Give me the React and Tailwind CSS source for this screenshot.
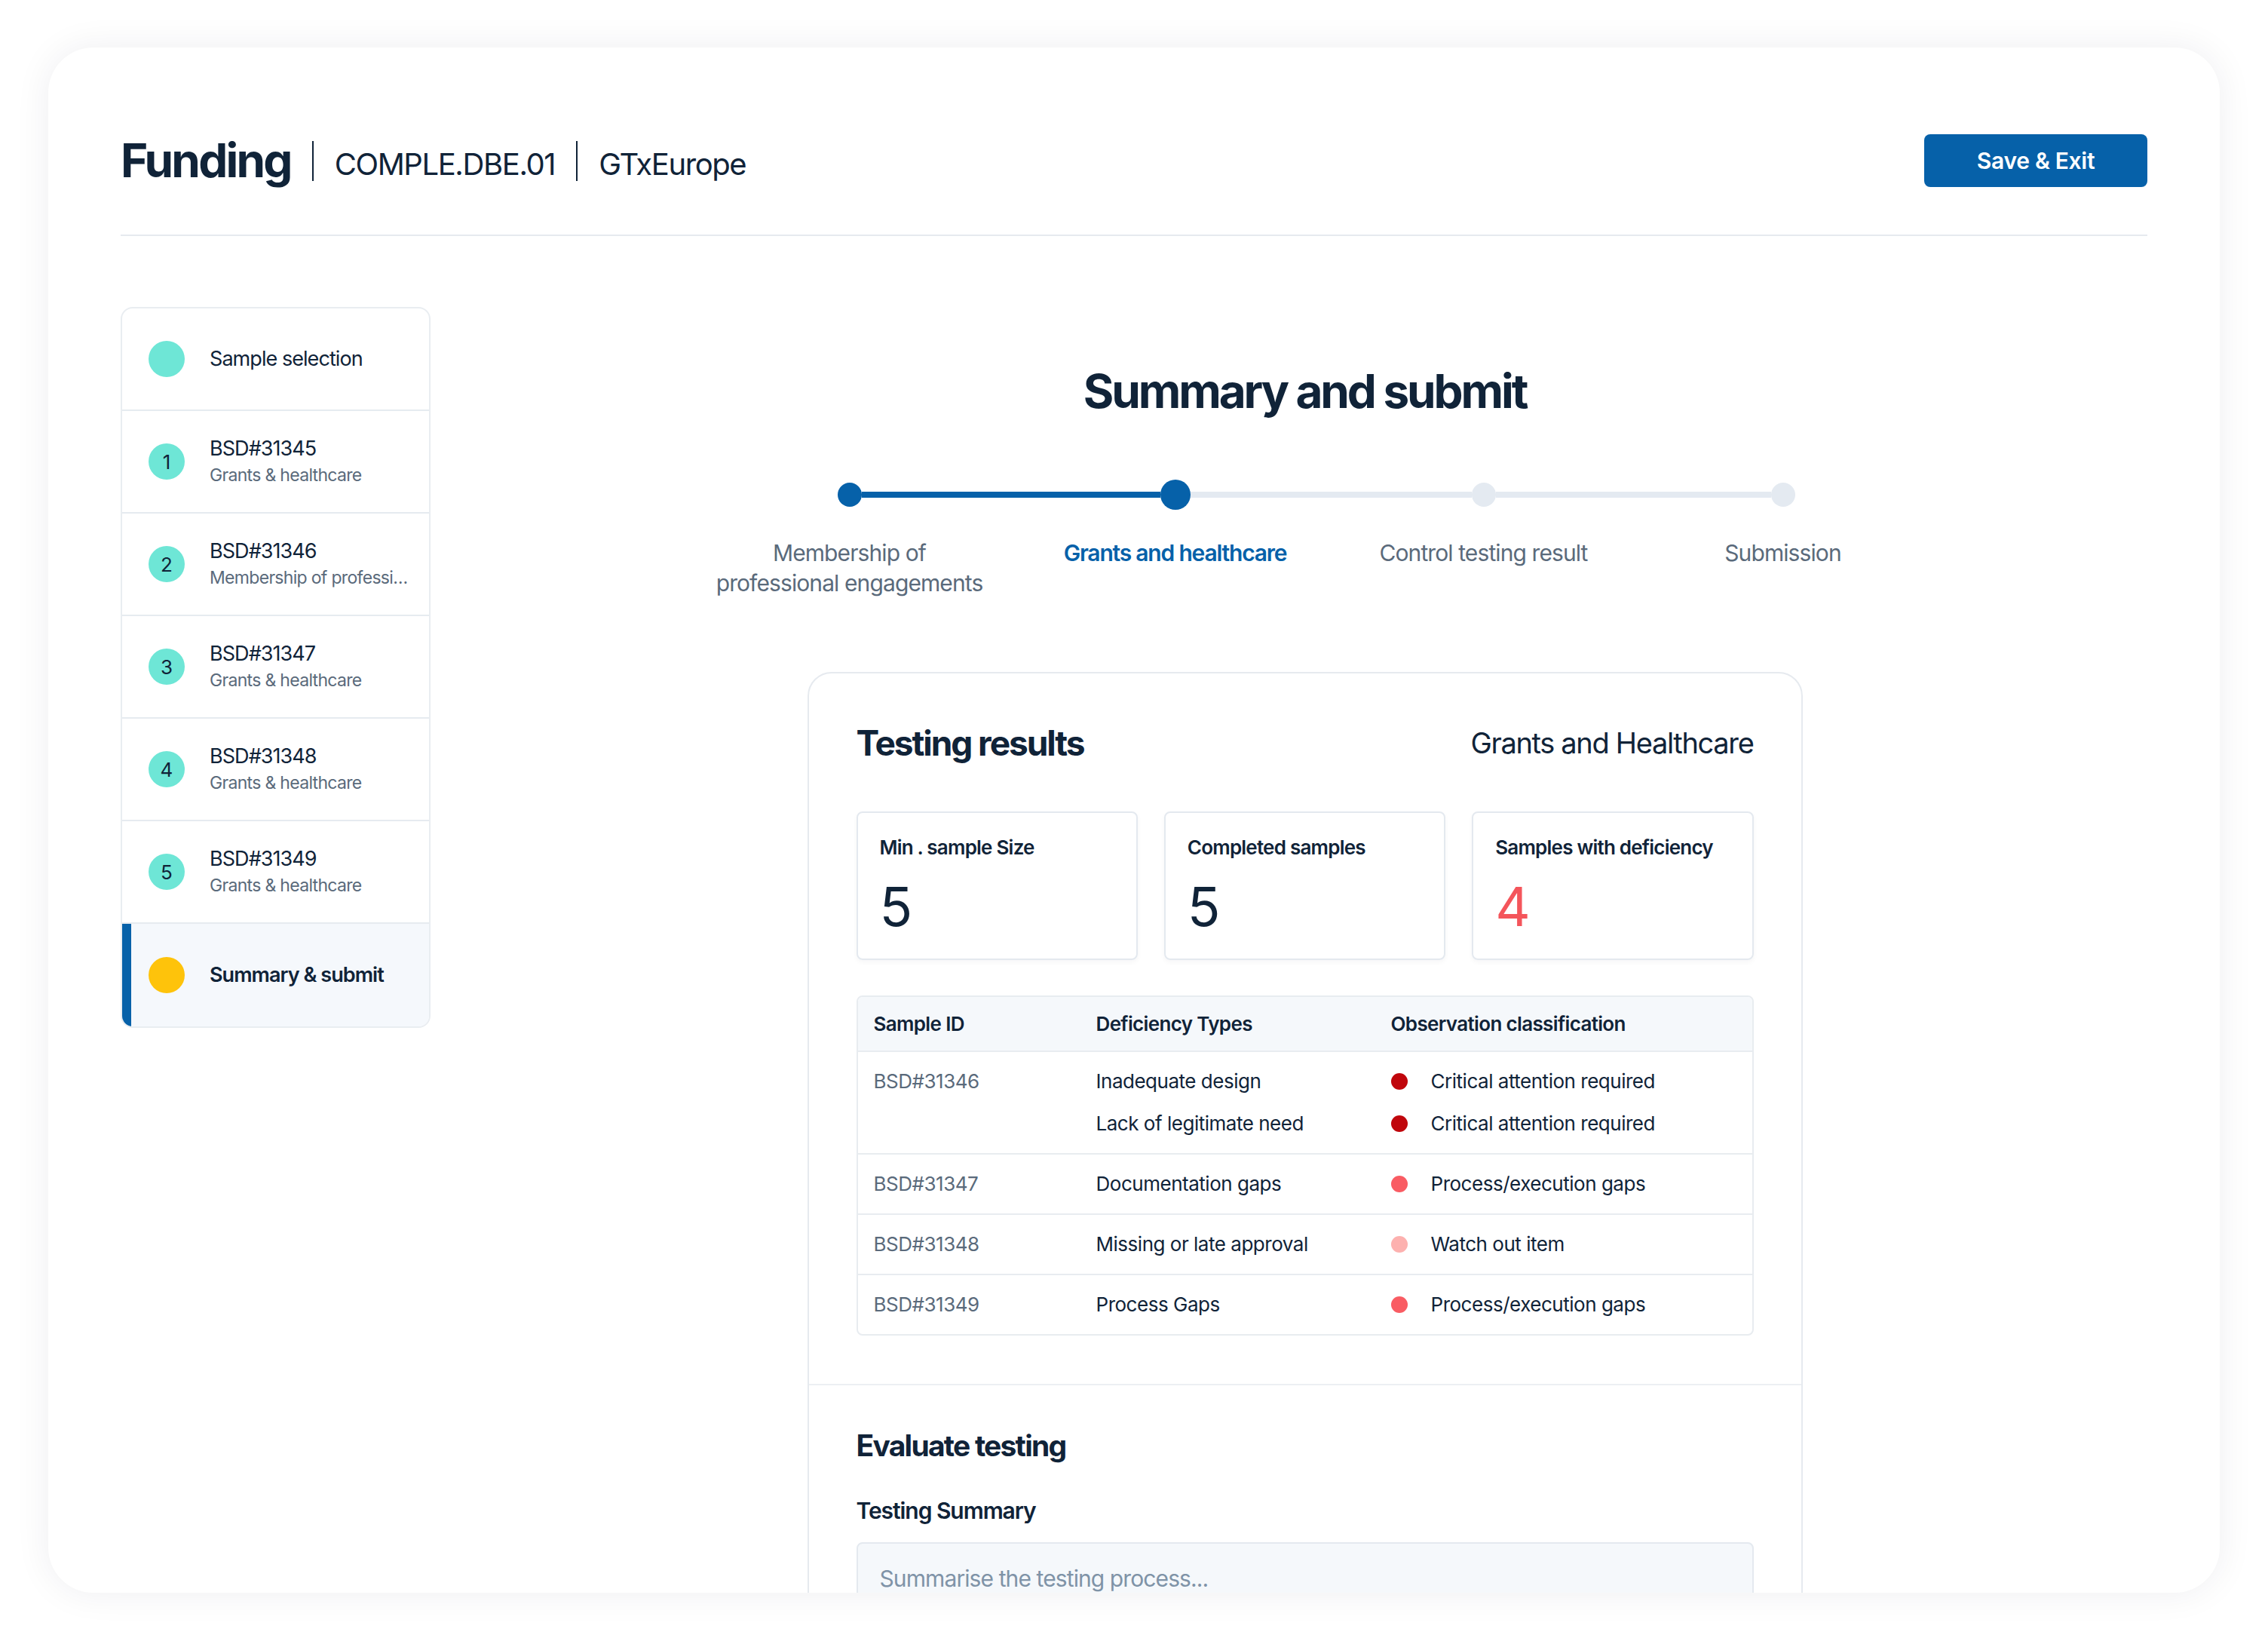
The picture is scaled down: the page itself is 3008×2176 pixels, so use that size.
import React from "react";

const samples = [
    { id: "BSD#31345", area: "Grants & healthcare" },
    { id: "BSD#31346", area: "Membership of professional engagements" },
    { id: "BSD#31347", area: "Grants & healthcare" },
    { id: "BSD#31348", area: "Grants & healthcare" },
    { id: "BSD#31349", area: "Grants & healthcare" },
];

const steps = [
    { label: ["Membership of", "professional engagements"], state: "done", width: "w-[450px]" },
    { label: ["Grants and healthcare"], state: "current", width: "w-[414px]" },
    { label: ["Control testing result"], state: "todo", width: "w-[404px]" },
    { label: ["Submission"], state: "todo", width: "w-[390px]" },
];

const findings = [
    {
        id: "BSD#31346",
        items: [
            { type: "Inadequate design", level: "Critical attention required", dot: "bg-[#c0060c]" },
            { type: "Lack of legitimate need", level: "Critical attention required", dot: "bg-[#c0060c]" },
        ],
    },
    { id: "BSD#31347", items: [{ type: "Documentation gaps", level: "Process/execution gaps", dot: "bg-[#f95c63]" }] },
    { id: "BSD#31348", items: [{ type: "Missing or late approval", level: "Watch out item", dot: "bg-[#fdb1af]" }] },
    { id: "BSD#31349", items: [{ type: "Process Gaps", level: "Process/execution gaps", dot: "bg-[#f95c63]" }] },
];

function SideRow({ badge, title, sub, active, color = "bg-[#6ee6d6]" })
{
    return (
        <div className={`h-[136px] flex items-center gap-[33px] ${active ? "bg-[#f5f8fc] border-l-[12px] border-l-[#0661a9] pl-[23px]" : "pl-[35px]"}`}>
            <div className={`w-[48px] h-[48px] shrink-0 rounded-full ${color} flex items-center justify-center text-[26px] text-[#102338] tracking-normal`}>
                {badge}
            </div>
            <div className="flex flex-col min-w-0 pr-[18px]">
                <p className={`text-[27px] leading-[32px] text-[#102338] tracking-[-0.035em] ${active ? "font-semibold" : ""}`}>{title}</p>
                {sub && <p className="mt-[4px] text-[23px] leading-[30px] text-[#5a6a7b] tracking-[-0.03em] truncate">{sub}</p>}
            </div>
        </div>
    );
}

function Stepper()
{
    return (
        <div className="flex mt-[80px]">
            {steps.map((s, i) => {
                const leftOn = i <= 1;
                const rightOn = i < 1;
                return (
                    <div key={i} className={`${s.width} flex flex-col items-center`}>
                        <div className="w-full h-[40px] flex items-center">
                            <div className={`flex-1 h-[8px] ${i === 0 ? "" : leftOn ? "bg-[#0661a9]" : "bg-[#e4eaf1]"}`} />
                            {s.state === "current" ? (
                                <div className="w-[40px] h-[40px] rounded-full bg-[#0661a9]" />
                            ) : (
                                <div className={`w-[32px] h-[32px] rounded-full ${s.state === "done" ? "bg-[#0661a9]" : "bg-[#e4eaf1]"}`} />
                            )}
                            <div className={`flex-1 h-[8px] ${i === steps.length - 1 ? "" : rightOn ? "bg-[#0661a9]" : "bg-[#e4eaf1]"}`} />
                        </div>
                        <p className={`mt-[37px] text-[30px] leading-[40px] text-center ${s.state === "current" ? "text-[#0661a9] font-semibold tracking-[-0.04em]" : "text-[#5a6a7b] tracking-[-0.03em]"}`}>
                            {s.label.map((l, j) => (
                                <span key={j} className="block">{l}</span>
                            ))}
                        </p>
                    </div>
                );
            })}
        </div>
    );
}

function Stat({ label, value, red })
{
    return (
        <div className="h-[197px] rounded-[8px] border-2 border-[#e4e9ef] shadow-[0_3px_6px_rgba(16,35,56,0.04)] px-[29px] pt-[30px]">
            <p className="text-[26px] leading-[32px] font-semibold text-[#102338] tracking-[-0.03em]">{label}</p>
            <p className={`mt-[26px] text-[72px] leading-none ${red ? "text-[#f4555b]" : "text-[#102338]"}`}>{value}</p>
        </div>
    );
}

function App()
{
    return (
        <div className="w-[3008px] h-[2176px] bg-white pt-[63px] px-[64px] font-['Inter','Noto_Sans',sans-serif] text-[#102338] tracking-[-0.03em]">
            <div className="h-[2049px] rounded-[60px] bg-white shadow-[0_0_48px_rgba(16,35,56,0.07)] overflow-hidden px-[96px] pt-[115px]">
                {/* Top bar */}
                <div className="flex items-center justify-between pb-[63px] border-b-2 border-[#e6eaef]">
                    <div className="flex items-center gap-[28px]">
                        <span className="text-[62px] leading-none font-bold tracking-[-0.045em]">Funding</span>
                        <span className="w-[2px] h-[53px] bg-[#102338]" />
                        <span className="mt-[9px] text-[40px] leading-none tracking-[-0.035em]">COMPLE.DBE.01</span>
                        <span className="w-[2px] h-[53px] bg-[#102338]" />
                        <span className="mt-[9px] text-[40px] leading-none tracking-[-0.035em]">GTxEurope</span>
                    </div>
                    <button className="w-[296px] h-[70px] rounded-[8px] bg-[#0661a9] text-white text-[30px] font-semibold tracking-[-0.01em]">
                        Save &amp; Exit
                    </button>
                </div>

                <div className="flex gap-[42px] pt-[94px]">
                    {/* Sample list */}
                    <div className="w-[411px] shrink-0 self-start rounded-[16px] border-2 border-[#e9edf1] overflow-hidden bg-white divide-y-2 divide-[#e6ebf0]">
                        <SideRow title="Sample selection" />
                        {samples.map((s, i) => (
                            <SideRow key={s.id} badge={i + 1} title={s.id} sub={s.area} />
                        ))}
                        <SideRow title="Summary & submit" active color="bg-[#fec30b]" />
                    </div>

                    {/* Summary */}
                    <div className="flex-1 flex flex-col items-center">
                        <h1 className="mt-[75px] text-[62px] leading-[74px] font-bold tracking-[-0.05em]">Summary and submit</h1>
                        <Stepper />

                        <div className="mt-[98px] w-[1320px] rounded-[32px] border-2 border-[#e6eaef] bg-white">
                            <div className="px-[63px] pt-[64px] pb-[64px]">
                                <div className="flex items-center justify-between">
                                    <h2 className="text-[46px] leading-[56px] font-bold tracking-[-0.045em]">Testing results</h2>
                                    <span className="text-[38px] leading-[48px] tracking-[-0.035em]">Grants and Healthcare</span>
                                </div>

                                <div className="mt-[63px] grid grid-cols-3 gap-[35px]">
                                    <Stat label="Min . sample Size" value="5" />
                                    <Stat label="Completed samples" value="5" />
                                    <Stat label="Samples with deficiency" value="4" red />
                                </div>

                                <div className="mt-[47px] rounded-[8px] border-2 border-[#e8ecf0] overflow-hidden divide-y-2 divide-[#e8ecf0]">
                                    <div className="grid grid-cols-[295px_391px_1fr] items-center h-[73px] pl-[21px] bg-[#f5f8fb] text-[26px] font-semibold tracking-[-0.025em]">
                                        <span>Sample ID</span>
                                        <span>Deficiency Types</span>
                                        <span>Observation classification</span>
                                    </div>
                                    {findings.map((row) => (
                                        <div key={row.id} className="grid grid-cols-[295px_391px_1fr] py-[23px] pl-[21px] text-[26px] leading-[32px]">
                                            <span className="text-[#5a6a7b]">{row.id}</span>
                                            <div className="flex flex-col gap-[24px]">
                                                {row.items.map((it, j) => (
                                                    <span key={j}>{it.type}</span>
                                                ))}
                                            </div>
                                            <div className="flex flex-col gap-[24px]">
                                                {row.items.map((it, j) => (
                                                    <div key={j} className="flex items-center gap-[31px]">
                                                        <span className={`w-[22px] h-[22px] rounded-full ${it.dot}`} />
                                                        <span>{it.level}</span>
                                                    </div>
                                                ))}
                                            </div>
                                        </div>
                                    ))}
                                </div>
                            </div>

                            {/* Evaluate */}
                            <div className="border-t-2 border-[#eceff3] px-[63px] pt-[56px]">
                                <h3 className="text-[39px] leading-[48px] font-bold tracking-[-0.045em]">Evaluate testing</h3>
                                <p className="mt-[44px] text-[30px] leading-[36px] font-semibold tracking-[-0.035em]">Testing Summary</p>
                                <textarea
                                    className="mt-[24px] w-full h-[160px] resize-none rounded-[8px] border-2 border-[#e4e9ef] bg-[#f5f8fb] px-[29px] pt-[28px] text-[30px] leading-[36px] tracking-[-0.03em] placeholder:text-[#7f93a7] outline-none"
                                    placeholder="Summarise the testing process..."
                                />
                            </div>
                        </div>
                    </div>
                </div>
            </div>
        </div>
    );
}

export default App;
